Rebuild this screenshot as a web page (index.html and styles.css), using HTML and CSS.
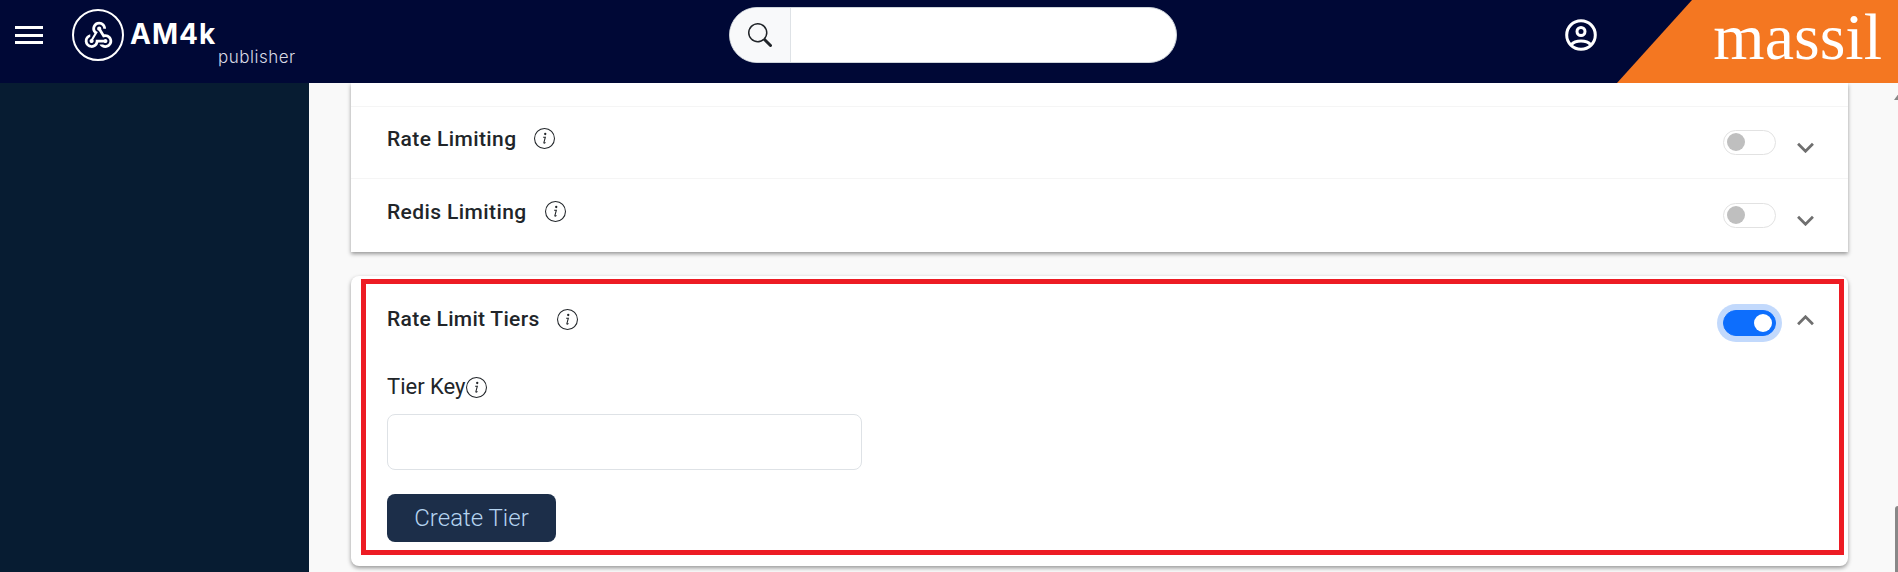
FILE: index.html
```html
<!DOCTYPE html>
<html>
<head>
    <meta charset="UTF-8">
    <meta name="viewport" content="width=device-width, initial-scale=1.0">
    <title>AM4k publisher</title>
    <link rel="stylesheet" href="styles.css">
</head>
<body>
    <header class="topbar">
        <div class="menu-btn"><span></span><span></span><span></span></div>
        <div class="logo">
            <div class="logo-ring">
                <svg viewBox="0 0 24 24" width="33" height="33" fill="#fff"><path d="M10 15h5.88c.27-.31.67-.5 1.12-.5.83 0 1.5.67 1.5 1.5s-.67 1.5-1.5 1.5c-.44 0-.84-.19-1.12-.5H11.9A5 5 0 1 1 6 11.1v2.07c-1.16.41-2 1.53-2 2.83 0 1.65 1.35 3 3 3s3-1.35 3-3v-1zm2.5-11c1.65 0 3 1.35 3 3h2c0-2.76-2.24-5-5-5a5.002 5.002 0 0 0-3.45 8.62l-2.35 3.9c-.68.14-1.2.75-1.2 1.48 0 .83.67 1.5 1.5 1.5a1.498 1.498 0 0 0 1.13-2.5l3.38-5.63C10.65 9.08 9.5 8.33 9.5 7c0-1.65 1.35-3 3-3zm4.5 9c-.64 0-1.23.2-1.72.54l-3.05-5.07C11.53 8.35 11 7.74 11 7c0-.83.67-1.5 1.5-1.5S14 6.17 14 7c0 .15-.02.29-.06.43l2.19 3.65c.28-.05.57-.08.87-.08 2.76 0 5 2.24 5 5s-2.24 5-5 5a5 5 0 0 1-4.33-2.5h2.67c.48.32 1.05.5 1.66.5 1.65 0 3-1.35 3-3s-1.35-3-3-3z"/></svg>
            </div>
            <div class="logo-text">
                <div class="logo-name">AM4k</div>
                <div class="logo-sub">publisher</div>
            </div>
        </div>
        <div class="search">
            <div class="search-icon">
                <svg viewBox="0 0 16 16" width="24" height="24" fill="#212529"><path d="M11.742 10.344a6.5 6.5 0 1 0-1.397 1.398h-.001c.03.04.062.078.098.115l3.85 3.85a1 1 0 0 0 1.415-1.414l-3.85-3.85a1.007 1.007 0 0 0-.115-.1zM12 6.5a5.5 5.5 0 1 1-11 0 5.5 5.5 0 0 1 11 0z"/></svg>
            </div>
            <div class="search-field"></div>
        </div>
        <div class="user-icon">
            <svg viewBox="0 0 32 32" width="32" height="32" fill="none" stroke="#fff" stroke-width="3"><circle cx="16" cy="16" r="14.300"/><circle cx="16" cy="12.500" r="4"/><path d="M6.500 25.500c2-2.500 5.500-3.500 9.500-3.500s7.500 1 9.500 3.500"/></svg>
        </div>
        <div class="brand">massil</div>
    </header>

    <div class="layout">
        <aside class="sidebar"></aside>
        <main class="content">
            <section class="card card-top">
                <div class="row row-cut"></div>
                <div class="row">
                    <span class="row-title">Rate Limiting</span>
                    <svg class="info info-row" viewBox="0 0 20 20"><circle cx="10" cy="10" r="9.500"/><circle class="dot" cx="10.700" cy="5.700" r="1.100"/><path d="M8.700 8.800h2.100l-1.400 5.100c-.15.6.4.8 1.500-.2"/></svg>
                    <div class="row-end">
                        <span class="toggle"><span class="knob"></span></span>
                        <svg class="chevron" viewBox="0 0 16 10"><path d="M1 1.500l7 7 7-7"/></svg>
                    </div>
                </div>
                <div class="row">
                    <span class="row-title">Redis Limiting</span>
                    <svg class="info info-row" viewBox="0 0 20 20"><circle cx="10" cy="10" r="9.500"/><circle class="dot" cx="10.700" cy="5.700" r="1.100"/><path d="M8.700 8.800h2.100l-1.400 5.100c-.15.6.4.8 1.500-.2"/></svg>
                    <div class="row-end">
                        <span class="toggle"><span class="knob"></span></span>
                        <svg class="chevron" viewBox="0 0 16 10"><path d="M1 1.500l7 7 7-7"/></svg>
                    </div>
                </div>
            </section>

            <section class="card card-tiers">
                <div class="tiers-head">
                    <span class="row-title tiers-title">Rate Limit Tiers</span>
                    <svg class="info info-tiers" viewBox="0 0 20 20"><circle cx="10" cy="10" r="9.500"/><circle class="dot" cx="10.700" cy="5.700" r="1.100"/><path d="M8.700 8.800h2.100l-1.400 5.100c-.15.6.4.8 1.500-.2"/></svg>
                    <div class="row-end">
                        <span class="toggle on"><span class="knob"></span></span>
                        <svg class="chevron" viewBox="0 0 16 10"><path d="M1 8.500l7-7 7 7"/></svg>
                    </div>
                </div>
                <label class="field-label">Tier Key<svg class="info" viewBox="0 0 20 20"><circle cx="10" cy="10" r="9.500"/><circle class="dot" cx="10.700" cy="5.700" r="1.100"/><path d="M8.700 8.800h2.100l-1.400 5.100c-.15.6.4.8 1.500-.2"/></svg></label>
                <input class="field-input" type="text">
                <button class="create-btn">Create Tier</button>
                <div class="highlight"></div>
            </section>
        </main>
    </div>

    <div class="scroll-arrow"></div>
    <div class="scroll-thumb"></div>
</body>
</html>
```

FILE: styles.css
```css
* {
    box-sizing: border-box;
}

body {
    margin: 0;
    height: 572px;
    overflow: hidden;
    position: relative;
    font-family: Roboto, sans-serif;
    color: #212529;
    background: #f9f9f9;
}

/* Top bar */
.topbar {
    height: 83px;
    background: #000836;
    display: flex;
    align-items: flex-start;
    position: relative;
    overflow: hidden;
}

.menu-btn {
    width: 28px;
    margin: 26px 0 0 15px;
    display: flex;
    flex-direction: column;
    gap: 4.5px;
}

.menu-btn span {
    height: 3px;
    background: #fff;
}

.logo {
    display: flex;
    align-items: flex-start;
    margin-left: 29px;
    height: 83px;
    padding-top: 9px;
}

.logo-ring {
    width: 52px;
    height: 52px;
    border: 2.500px solid #fff;
    border-radius: 50%;
    display: flex;
    align-items: center;
    justify-content: center;
}

.logo-text {
    margin-left: 6px;
    color: #fff;
    font-family: Inter, sans-serif;
}

.logo-name {
    font-size: 28px;
    font-weight: 700;
    letter-spacing: 1px;
    line-height: 34px;
    margin-top: 8px;
}

.logo-sub {
    font-size: 17px;
    font-weight: 300;
    letter-spacing: 0.5px;
    line-height: 18px;
    margin-left: 88px;
    margin-top: -3px;
    color: #d8dae4;
    white-space: nowrap;
    width: 0;
}

.search {
    position: absolute;
    left: 729px;
    top: 7px;
    width: 448px;
    height: 56px;
    display: flex;
    border-radius: 28px;
    overflow: hidden;
    border: 1px solid #ced4da;
    background: #fff;
}

.search-icon {
    width: 61px;
    background: #f8f9fa;
    border-right: 1px solid #dee2e6;
    display: flex;
    align-items: center;
    justify-content: center;
}

.search-field {
    flex: 1;
}

.user-icon {
    position: absolute;
    left: 1565px;
    top: 19px;
    height: 32px;
}

.brand {
    position: absolute;
    right: 0;
    top: 0;
    width: 281px;
    height: 83px;
    background: #f47721;
    clip-path: polygon(75px 0, 100% 0, 100% 100%, 0 100%);
    color: #fff;
    font-family: "Liberation Serif", serif;
    font-size: 66px;
    line-height: 70px;
    text-align: right;
    padding: 2px 16px 0 0;
}

/* Layout */
.layout {
    display: flex;
    height: 489px;
}

.sidebar {
    width: 309px;
    background: #071c32;
}

.content {
    flex: 1;
    padding: 0 50px 0 42px;
}

.card {
    background: #fff;
    box-shadow: 0 2px 4px rgba(0, 0, 0, 0.4);
}

.row {
    height: 72px;
    padding: 0 34px 8px 36px;
    display: flex;
    align-items: center;
    border-bottom: 1px solid #f5f5f5;
}

.row:last-child {
    height: 73px;
    border-bottom: none;
}

.row-cut {
    height: 24px;
    padding: 0;
}

.row-title {
    font-size: 21px;
    font-weight: 500;
    letter-spacing: 0.4px;
}

.info {
    width: 21px;
    height: 21px;
    fill: none;
    stroke: #212529;
    stroke-width: 1;
    flex: none;
}

.info .dot {
    fill: #212529;
    stroke: none;
}

.info-row {
    margin-left: 18px;
}

.row-end {
    margin-left: auto;
    padding-top: 7px;
    display: flex;
    align-items: center;
}

.toggle {
    width: 53px;
    height: 25px;
    border: 1px solid #e2e2e2;
    border-radius: 13px;
    background: #fff;
    display: flex;
    align-items: center;
    padding: 0 3px;
}

.knob {
    width: 18px;
    height: 18px;
    border-radius: 50%;
    background: #bfbfbf;
}

.toggle.on {
    background: #0d6efd;
    border-color: #0d6efd;
    justify-content: flex-end;
    box-shadow: 0 0 0 6px #c2d9fc;
    height: 26px;
}

.toggle.on .knob {
    background: #fff;
}

.chevron {
    width: 17px;
    height: 11px;
    margin-left: 21px;
    margin-top: 10px;
    fill: none;
    stroke: #6f6f6f;
    stroke-width: 2.6;
}

/* Rate limit tiers card */
.card-tiers {
    margin-top: 24px;
    height: 290px;
    border-radius: 8px;
    padding: 30px 34px 0 36px;
    position: relative;
}

.tiers-head {
    display: flex;
    align-items: center;
    height: 26px;
}

.tiers-title {
    letter-spacing: 0.3px;
}

.info-tiers {
    margin-left: 17px;
}

.tiers-head .row-end {
    padding-top: 8px;
}

.tiers-head .chevron {
    margin-top: -6px;
}

.field-label {
    display: flex;
    align-items: center;
    margin-top: 43px;
    font-size: 22px;
    line-height: 24px;
}

.field-input {
    display: block;
    width: 475px;
    height: 56px;
    margin-top: 15px;
    border: 1px solid #dee2e6;
    border-radius: 8px;
    background: #fff;
}

.create-btn {
    display: block;
    width: 169px;
    height: 48px;
    margin-top: 24px;
    border: none;
    border-radius: 8px;
    background: #1c2e49;
    color: #b5d4f0;
    font-family: Roboto, sans-serif;
    font-size: 24px;
    font-weight: 300;
}

/* Red annotation box */
.highlight {
    position: absolute;
    left: 10px;
    top: 3px;
    right: 4px;
    bottom: 11px;
    border: 5px solid #ed1c24;
}

/* Scrollbar bits */
.scroll-arrow {
    position: absolute;
    left: 1894px;
    top: 93px;
    border-left: 5px solid transparent;
    border-right: 5px solid transparent;
    border-bottom: 7px solid #888;
}

.scroll-thumb {
    position: absolute;
    left: 1895px;
    top: 506px;
    width: 3px;
    height: 66px;
    background: #888;
    border-radius: 3px 0 0 0;
}
```
